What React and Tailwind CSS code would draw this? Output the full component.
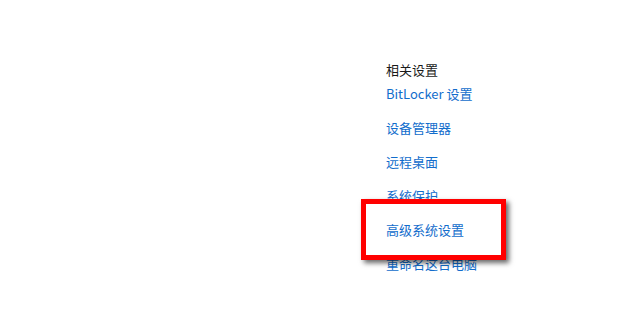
import React from 'react';

const links = ['BitLocker 设置', '设备管理器', '远程桌面', '系统保护', '高级系统设置', '重命名这台电脑'];

export default function App() {
  return (
    <div
      className="relative w-[620px] h-[309px] bg-white overflow-hidden"
      style={{ fontFamily: '"Segoe UI", "Noto Sans CJK SC", "Noto Sans", sans-serif' }}
    >
      <div className="flex flex-col pl-[386px] pt-[60px] text-[13px] leading-[20px]">
        <p className="text-[#1a1a1a]">相关设置</p>
        <div className="flex flex-col gap-[14px] mt-[4px]">
          {links.map((l) => (
            <a key={l} className="text-[#126dcc] cursor-pointer">
              {l}
            </a>
          ))}
        </div>
      </div>
      {/* highlight box */}
      <div className="absolute left-[361px] top-[199px] w-[145px] h-[61px] border-[5px] border-[#ff0000] shadow-[3px_3px_5px_rgba(0,0,0,0.6)]" />
    </div>
  );
}
